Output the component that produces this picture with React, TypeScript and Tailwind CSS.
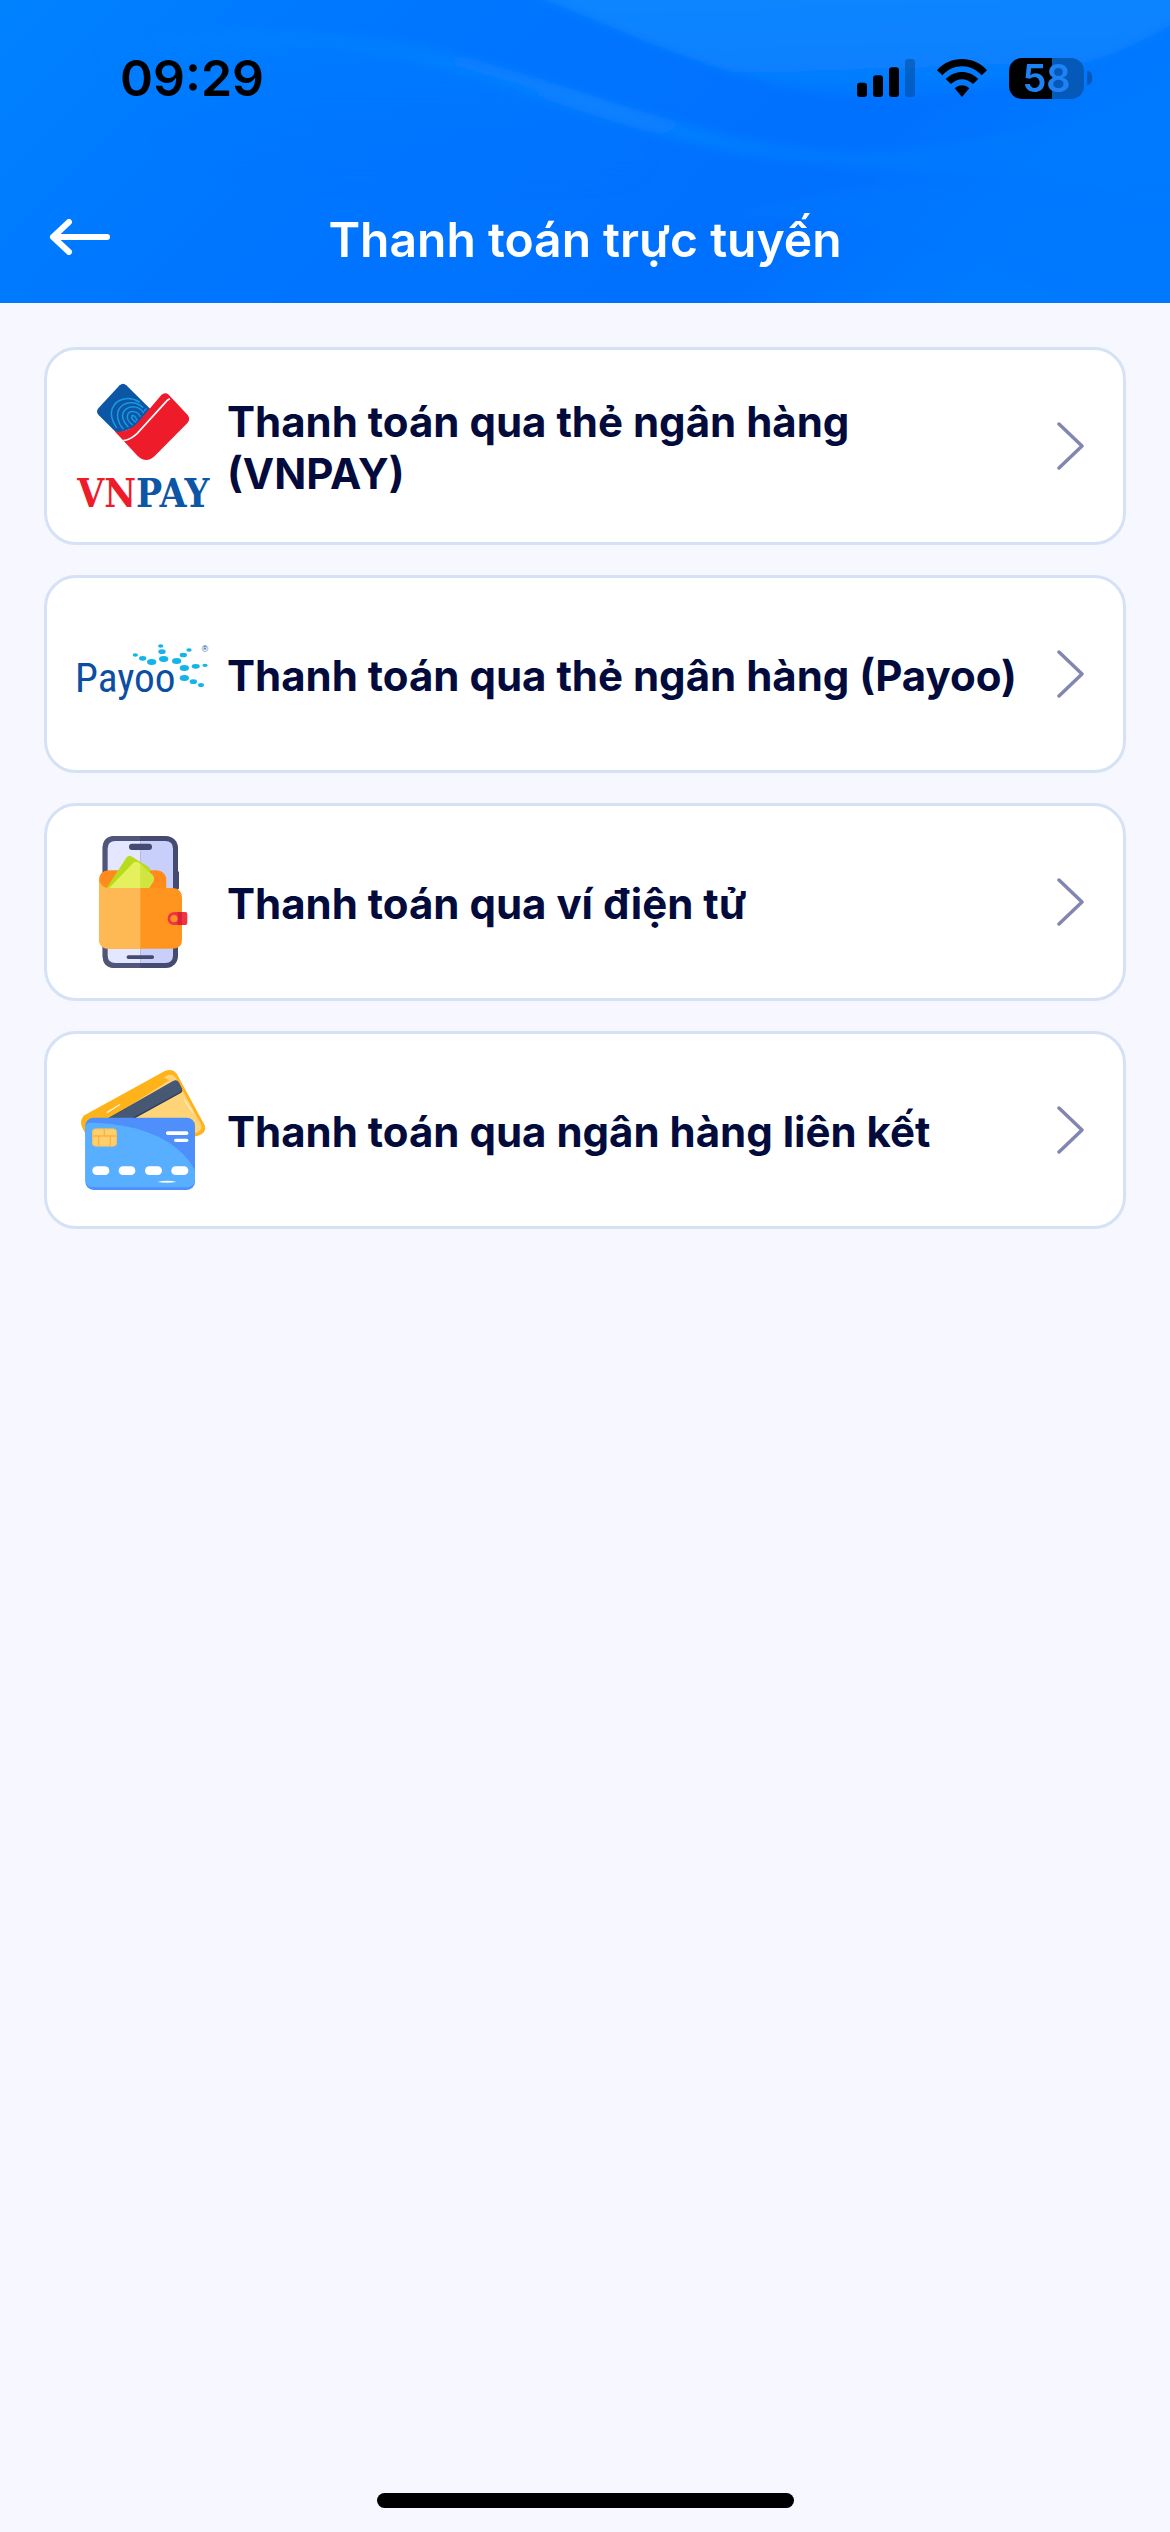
import type { ReactNode } from "react";

function HeaderWaves() {
  return (
    <svg
      className="absolute inset-0 h-full w-full"
      viewBox="0 0 1170 303"
      preserveAspectRatio="none"
      aria-hidden="true"
    >
      <defs>
        <linearGradient id="base" x1="0" y1="0" x2="1" y2="0.25">
          <stop offset="0" stopColor="#0082ff" />
          <stop offset="0.35" stopColor="#0076ff" />
          <stop offset="0.8" stopColor="#0070ff" />
          <stop offset="1" stopColor="#007aff" />
        </linearGradient>
        <linearGradient id="band" x1="0" y1="0" x2="1" y2="0.3">
          <stop offset="0" stopColor="#0a86ff" stopOpacity="0" />
          <stop offset="0.55" stopColor="#0c84ff" stopOpacity="0.9" />
          <stop offset="1" stopColor="#0080ff" stopOpacity="0.3" />
        </linearGradient>
        <linearGradient id="corner" x1="0" y1="0" x2="0.2" y2="1">
          <stop offset="0" stopColor="#0f86ff" />
          <stop offset="0.7" stopColor="#0a82ff" />
          <stop offset="1" stopColor="#0078ff" />
        </linearGradient>
        <linearGradient id="fold" x1="0" y1="0" x2="0" y2="1">
          <stop offset="0" stopColor="#0080ff" stopOpacity="0.9" />
          <stop offset="1" stopColor="#0076ff" stopOpacity="0" />
        </linearGradient>
        <filter id="soft" x="-10%" y="-10%" width="120%" height="120%">
          <feGaussianBlur stdDeviation="4" />
        </filter>
      </defs>
      <rect width="1170" height="303" fill="url(#base)" />
      <g filter="url(#soft)">
        <path d="M520 -10C600 20 700 70 800 90C920 112 1060 90 1180 20V-10Z" fill="url(#corner)" />
        <path
          d="M100 50C180 22 300 22 400 40C520 66 640 118 760 142C880 162 1000 150 1180 80V180C1000 180 880 172 760 158C640 138 520 86 400 58C300 38 200 40 100 70Z"
          fill="url(#band)"
        />
        <path
          d="M150 36C300 20 400 50 520 84C640 120 720 190 560 196C400 202 240 190 160 150Z"
          fill="url(#fold)"
          opacity="0.6"
        />
        <path
          d="M730 214C830 186 940 180 1040 192C1100 200 1140 206 1180 212V313H1100C1000 240 860 220 730 214Z"
          fill="#0a78ff"
          opacity="0.5"
        />
      </g>
    </svg>
  );
}

function SignalIcon() {
  return (
    <svg className="h-[38px] w-[58px]" viewBox="108 86 174 112" preserveAspectRatio="none" aria-label="Tín hiệu di động">
      <rect x="108" y="156" width="30" height="42" rx="9" />
      <rect x="156" y="134" width="30" height="64" rx="9" />
      <rect x="204" y="110" width="30" height="88" rx="9" />
      <rect x="252" y="86" width="30" height="112" rx="9" opacity="0.22" />
    </svg>
  );
}

function WifiIcon() {
  return (
    <svg className="h-[38px] w-[50px]" viewBox="350 86 150 112" preserveAspectRatio="none" aria-label="Wi-Fi">
      <path d="M350 119C390 75 460 75 500 119L484 134C452 98 398 98 366 134Z" />
      <path d="M376 145C404 117 446 117 474 145L458 160C438 141 412 141 392 160Z" />
      <path d="M403 172C415 160 435 160 447 172L425 198Z" />
    </svg>
  );
}

function Battery() {
  return (
    <div className="flex items-center gap-[3px]">
      <div className="flex h-[41px] w-[75px] items-center justify-center rounded-[13px] bg-[linear-gradient(90deg,#000_57%,#0559b8_57%)] text-[38px] leading-none font-semibold text-[#1e82f5]">
        58
      </div>
      <span className="h-[14px] w-[5px] rounded-r-full bg-[#0559b8]" />
    </div>
  );
}

function VnpayLogo() {
  return (
    <svg className="size-[132px] shrink-0 overflow-visible" viewBox="111 120 396 396" aria-hidden="true">
      <path
        d="M239 136Q249 127 259 136L331 207L284 262L244 277L228 277L175 224Q167 215 175 205Z"
        fill="#0d56a6"
      />
      <g fill="none" stroke="#189ae0" strokeWidth="4.500" strokeLinecap="round">
        <path d="M298 186C270 168 230 173 217 205C210 224 218 246 229 262" />
        <path d="M308 202C291 185 258 182 240 203C226 221 234 249 249 266" />
        <path d="M310 218C300 201 275 194 257 208C239 223 250 246 264 260" />
        <path d="M300 229C293 211 268 211 263 224C259 236 268 248 277 254" />
        <path d="M291 241C287 228 277 222 275 230C275 237 282 243 287 246" />
        <path d="M318 207L313 212" />
      </g>
      <path
        d="M224 274C252 279 274 268 292 250L364 165Q375 155 386 164L443 225Q452 237 443 248L344 348Q319 372 293 348Z"
        fill="#ee1c2a"
      />
      <path d="M250 302C267 301 280 291 291 281L379 184Q384 178 390 176" fill="none" stroke="#fff" strokeWidth="5" />
      <text x="112" y="500" fontFamily='"DejaVu Serif Condensed", "Liberation Serif", serif' fontWeight="700" fontSize="116">
        <tspan fill="#ee1c2a">VN</tspan>
        <tspan fill="#0d56a6">PAY</tspan>
      </text>
    </svg>
  );
}

const payooDots = [
  [286, 255, 8, 5], [308, 265, 11, 7], [335, 276, 14, 9],
  [362, 228, 8, 5], [366, 245, 11, 7], [371, 267, 14, 9],
  [447, 240, 8, 5], [430, 255, 11, 7], [410, 273, 14, 9],
  [495, 286, 8, 5], [467, 289, 12, 7], [433, 294, 14, 9],
  [433, 324, 14, 9], [460, 335, 11, 7], [483, 345, 9, 6],
];

function PayooLogo() {
  return (
    <svg className="size-[132px] shrink-0 overflow-visible" viewBox="111 114 396 396" aria-hidden="true">
      <text
        x="105"
        y="365"
        fontFamily='"Roboto Condensed", "Roboto", sans-serif'
        fontWeight="400"
        fontSize="124"
        fill="#0b4ea2"
      >
        Payoo
      </text>
      {payooDots.map(([cx, cy, rx, ry]) => (
        <ellipse key={`${cx}-${cy}`} cx={cx} cy={cy} rx={rx} ry={ry} fill="#12b4ea" />
      ))}
      <text x="485" y="245" fontFamily='"Liberation Sans", sans-serif' fontSize="26" fill="#0b4ea2">
        ®
      </text>
    </svg>
  );
}

function WalletIcon() {
  return (
    <svg className="size-[132px] shrink-0" viewBox="111 108 396 396" aria-hidden="true">
      <rect x="188" y="108" width="226" height="396" rx="36" fill="#454a70" />
      <path d="M224 108H301V504H224Q188 504 188 468V144Q188 108 224 108Z" fill="#50557a" />
      <rect x="408" y="214" width="9" height="54" rx="4" fill="#454a70" />
      <path d="M301 123H376Q399 123 399 146V466Q399 489 376 489H301Z" fill="#c9cffb" />
      <path d="M301 123H226Q203 123 203 146V466Q203 489 226 489H301Z" fill="#e3e7ff" />
      <rect x="267" y="131" width="69" height="19" rx="9" fill="#454a70" />
      <rect x="260" y="466" width="82" height="11" rx="5" fill="#454a70" />
      <path d="M207 211H350Q379 213 379 243V275H190Q177 262 177 241Q177 212 207 211Z" fill="#ff8c1a" />
      <path d="M196 270L260 172Q267 163 276 170L326 201Q334 208 330 217L318 270Z" fill="#b8dc1c" />
      <path d="M204 268L279 190Q287 181 296 187L338 225Q345 232 341 244L325 268Z" fill="#d0e540" />
      <path d="M204 268L279 190Q287 181 301 191V268Z" fill="#e4f05c" />
      <path d="M177 236C178 253 192 264 208 264H398Q426 266 426 294V420Q426 446 398 446H207Q177 446 177 416Z" fill="#ff951f" />
      <path d="M177 236C178 253 192 264 208 264H301V446H207Q177 446 177 416Z" fill="#ffb954" />
      <path d="M403 336H436Q442 336 442 342V369Q442 375 436 375H403Q383 373 383 356Q383 338 403 336Z" fill="#ef3340" />
      <path d="M413 336H426V375H413Z" fill="#d92335" />
      <circle cx="402" cy="356" r="10" fill="#ff951f" stroke="#ff7d45" strokeWidth="3" />
    </svg>
  );
}

function CardsIcon() {
  return (
    <svg className="size-[132px] shrink-0" viewBox="111 102 396 396" aria-hidden="true">
      <path
        d="M133 256L373 124Q398 113 411 133L494 286Q502 310 471 319H140L126 291Q118 270 133 256Z"
        fill="#ffb31a"
      />
      <path d="M137 275L380 137Q397 130 407 143L483 283Q489 298 474 306L440 319H165Z" fill="#ffd479" />
      <path d="M129 272L365 139L388 151L216 262L138 285Z" fill="#ffb31a" />
      <path d="M204 265L399 155Q411 148 417 159L426 177Q429 185 421 190L286 264Z" fill="#2c3c58" />
      <path d="M204 265L399 153Q411 147 417 158L425 175Q427 181 420 186L277 264Z" fill="#475875" />
      <path d="M198 247L239 222Q243 221 239 226L203 249Z" fill="#fff3d6" />
      <path d="M432 205L457 242Q463 252 458 249L436 217Z" fill="#fff3d6" />
      <rect x="136" y="263" width="329" height="217" rx="25" fill="#4f8ffc" />
      <path
        d="M136 288V449Q138 472 161 472H440Q463 471 465 449V421C420 335 310 282 157 278Q140 278 136 288Z"
        fill="#58afff"
      />
      <rect x="157" y="296" width="73" height="53" rx="9" fill="#ffcf6e" />
      <path d="M157 318H230M193 296V318M176 318V349M211 318V349" fill="none" stroke="#f7b445" strokeWidth="4" />
      <rect x="158" y="297" width="71" height="51" rx="9" fill="none" stroke="#fcbf55" strokeWidth="3" />
      <rect x="378" y="304" width="67" height="11" rx="5" fill="#fff" />
      <rect x="402" y="326" width="43" height="10" rx="5" fill="#fff" />
      <rect x="157" y="409" width="51" height="26" rx="13" fill="#fff" />
      <rect x="236" y="409" width="50" height="26" rx="13" fill="#fff" />
      <rect x="315" y="409" width="51" height="26" rx="13" fill="#fff" />
      <rect x="394" y="409" width="51" height="26" rx="13" fill="#fff" />
      <path d="M352 456Q381 448 410 456Q381 460 352 456Z" fill="#fff" />
    </svg>
  );
}

function Chevron() {
  return (
    <svg className="h-12 w-7 shrink-0" viewBox="0 0 28 48" fill="none" aria-hidden="true">
      <path d="M2 2L25 24L2 46" stroke="#8286b0" strokeWidth="3.500" strokeLinecap="round" strokeLinejoin="round" />
    </svg>
  );
}

const methods: { label: string; icon: ReactNode }[] = [
  { label: "Thanh toán qua thẻ ngân hàng (VNPAY)", icon: <VnpayLogo /> },
  { label: "Thanh toán qua thẻ ngân hàng (Payoo)", icon: <PayooLogo /> },
  { label: "Thanh toán qua ví điện tử", icon: <WalletIcon /> },
  { label: "Thanh toán qua ngân hàng liên kết", icon: <CardsIcon /> },
];

export default function App() {
  return (
    <div className="flex min-h-screen flex-col bg-[#f7f8ff] font-['Inter',sans-serif] text-[#020b3b]">
      <header className="relative overflow-hidden bg-[#0076ff]">
        <HeaderWaves />
        <div className="relative">
          <div className="flex items-center justify-between pt-12 pr-[78px] pl-[120px] text-black">
            <time className="text-[50px] leading-[60px] font-semibold">09:29</time>
            <div className="flex items-center gap-[22px]">
              <SignalIcon />
              <WifiIcon />
              <Battery />
            </div>
          </div>
          <div className="grid grid-cols-[64px_1fr_64px] items-start px-12 pt-[98px] pb-[29px] text-white">
            <button type="button" aria-label="Quay lại" className="flex h-[62px] items-center">
              <svg className="h-9 w-[64px]" viewBox="0 0 64 36" fill="none" aria-hidden="true">
                <path
                  d="M21 3L5 18L21 33M5 18H59"
                  stroke="currentColor"
                  strokeWidth="6"
                  strokeLinecap="round"
                  strokeLinejoin="round"
                />
              </svg>
            </button>
            <h1 className="text-center text-[48px] leading-[68px] font-semibold">Thanh toán trực tuyến</h1>
          </div>
        </div>
      </header>

      <main className="flex-1 px-11 pt-11">
        <ul className="flex flex-col gap-[30px]">
          {methods.map(({ label, icon }) => (
            <li key={label}>
              <button
                type="button"
                className="flex w-full items-center rounded-[32px] border-3 border-[#d5e1f4] bg-white py-[30px] pr-[38px] pl-[30px] text-left"
              >
                {icon}
                <span className="flex-1 pt-1 pr-8 pl-[18px] text-[42px] leading-[52px] font-bold">{label}</span>
                <Chevron />
              </button>
            </li>
          ))}
        </ul>
      </main>

      <div className="flex justify-center pb-6">
        <div className="h-[15px] w-[417px] rounded-full bg-black" />
      </div>
    </div>
  );
}
